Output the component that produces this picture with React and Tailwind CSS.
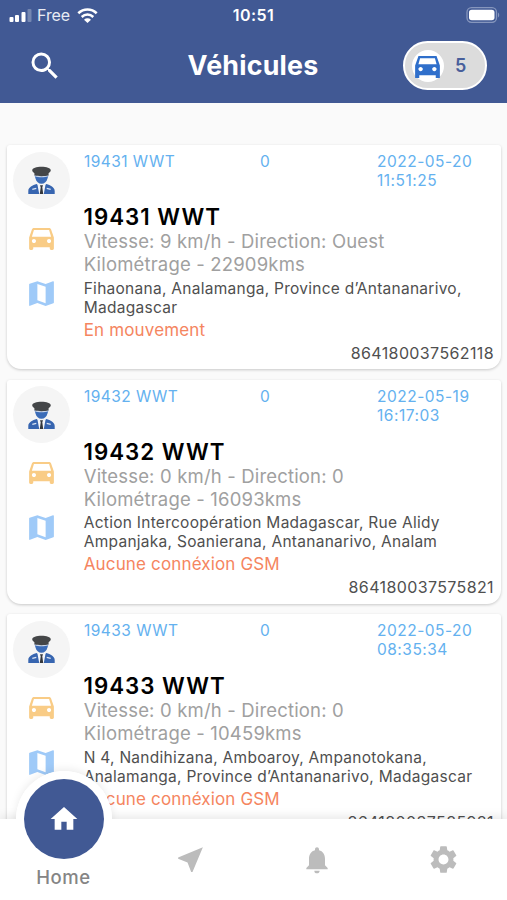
import { MdSearch, MdMap, MdHome, MdNearMe, MdNotifications, MdSettings } from 'react-icons/md';

const vehicles = [
  {
    name: '19431 WWT', date: '2022-05-20', time: '11:51:25', speed: '9', direction: 'Ouest', km: '22909',
    address: ['Fihaonana, Analamanga, Province d’Antananarivo,', 'Madagascar'],
    status: 'En mouvement', imei: '864180037562118',
  },
  {
    name: '19432 WWT', date: '2022-05-19', time: '16:17:03', speed: '0', direction: '0', km: '16093',
    address: ['Action Intercoopération Madagascar, Rue Alidy', 'Ampanjaka, Soanierana, Antananarivo, Analam'],
    status: 'Aucune connéxion GSM', imei: '864180037575821',
  },
  {
    name: '19433 WWT', date: '2022-05-20', time: '08:35:34', speed: '0', direction: '0', km: '10459',
    address: ['N 4, Nandihizana, Amboaroy, Ampanotokana,', 'Analamanga, Province d’Antananarivo, Madagascar'],
    status: 'Aucune connéxion GSM', imei: '864180037585981',
  },
];

function Driver() {
  return (
    <svg className="h-[28px] w-[27px]" viewBox="0 0 27 28">
      <path d="M6.500 9h14l-1 3.500c-.8 3.200-3 5.300-6 5.300s-5.200-2.100-6-5.300z" fill="#3b6cb8" />
      <path d="M6.600 9h13.800v1.300c-4 1.300-9.800 1.300-13.800 0z" fill="#c9d6ea" />
      <path d="M4.200 4.300C4.200 2 8.500.8 13.500.8s9.300 1.200 9.300 3.500c0 1.200-1.200 2.200-2.200 2.900v2.100c-4 1.200-10.200 1.200-14.200 0V7.200c-1-.7-2.200-1.700-2.200-2.900z" fill="#444648" />
      <path d="M.3 28v-3c0-4 4.500-5.600 8.200-7l5 2.500 5-2.500c3.700 1.400 8.200 3 8.200 7v3z" fill="#3765b0" />
      <path d="M9.300 17.800l4.200 1.600 4.200-1.600L15.800 28h-4.600z" fill="#f4f6fa" />
      <path d="M12 19.200h3l-.7 2 .9 6.800h-3.400l.9-6.800z" fill="#34373c" />
      <path d="M4.300 23.300l4-1M18.700 22.300l4 1" stroke="#dce6f5" strokeWidth="1.200" />
    </svg>
  );
}

function Car() {
  return (
    <svg className="mt-[12px] size-[33px] shrink-0 fill-[#f9cc86]" viewBox="0 0 24 24">
      <path fillRule="evenodd" d="M18.920 6.010C18.720 5.420 18.160 5 17.500 5h-11c-.66 0-1.210.42-1.420 1.010L3 12v8c0 .55.45 1 1 1h1c.55 0 1-.45 1-1v-1h12v1c0 .55.45 1 1 1h1c.55 0 1-.45 1-1v-8l-2.080-5.990zM6.500 16c-.83 0-1.500-.67-1.500-1.500S5.670 13 6.500 13s1.500.67 1.500 1.500S7.330 16 6.500 16zm11 0c-.83 0-1.500-.67-1.500-1.500s.67-1.500 1.500-1.500 1.500.67 1.500 1.500-.67 1.500-1.500 1.500zM5 11.500l1.500-5h11l1.500 5H5z" />
    </svg>
  );
}

function VehicleCard({ v }) {
  return (
    <article className="flex h-[224px] shrink-0 rounded-t-[3px] rounded-b-[14px] bg-white shadow-[0_1px_3px_rgba(0,0,0,0.2)]">
      <div className="flex w-[77px] shrink-0 flex-col items-center pr-[8px] pt-[6.500px]">
        <div className="flex size-[57px] items-center justify-center rounded-full bg-[#f5f5f5]">
          <Driver />
        </div>
        <Car />
        <MdMap className="mt-[23px] size-[33px] shrink-0 text-[#9fcaf8]" />
      </div>
      <div className="flex min-w-0 flex-1 flex-col pr-[7px] pt-[7px]">
        <div className="flex h-[51px] text-[15.500px] leading-[19px] tracking-[0.450px] text-[#64b1ef]">
          <span className="w-[176px]">{v.name}</span>
          <span className="w-[117px]">0</span>
          <span className="tracking-[0.500px]">{v.date}<br />{v.time}</span>
        </div>
        <h2 className="-ml-[0.500px] text-[22.300px] font-semibold leading-[27px] tracking-[1px] text-black">{v.name}</h2>
        <p className="-ml-[0.300px] whitespace-nowrap text-[18.500px] leading-[23px] tracking-[0.170px] text-[#a0a0a0]">
          Vitesse: {v.speed} km/h - Direction: {v.direction}<br />Kilométrage - {v.km}kms
        </p>
        <p className="-ml-[0.300px] mt-[2.500px] whitespace-nowrap text-[15.500px] leading-[19px] tracking-[0.270px] text-[#4f4f4f]">
          {v.address[0]}<br />{v.address[1]}
        </p>
        <p className="-ml-[0.300px] mt-[3px] text-[17px] leading-[20px] tracking-[0.150px] text-[#f58560]">{v.status}</p>
        <p className="mt-[3px] text-right text-[16px] leading-[20px] tracking-[0.380px] text-[#4f4f4f]">{v.imei}</p>
      </div>
    </article>
  );
}

function Header() {
  return (
    <header className="h-[102.500px] shrink-0 bg-[#415994] text-white">
      <div className="grid h-[30px] grid-cols-3 items-center pl-[9px] pr-[7px]">
        <div className="flex items-center">
          <svg className="h-[13px] w-[24px]" viewBox="0 0 24 13">
            <rect x="0.500" y="8" width="4" height="5" rx="1" fill="#fff" />
            <rect x="6" y="6" width="4" height="7" rx="1" fill="#fff" />
            <rect x="12.500" y="3" width="4" height="10" rx="1" fill="#fff" />
            <rect x="18.500" y="0" width="4" height="13" rx="1" fill="#7587b1" />
          </svg>
          <span className="ml-[4px] text-[16px] tracking-[-0.100px] text-[#e8ebf3]">Free</span>
          <svg className="ml-[7px] h-[15px] w-[21px]" viewBox="0 0 21 15">
            <path d="M1.300 5.300C6.600.2 14.400.2 19.700 5.300" fill="none" stroke="#fff" strokeWidth="2.600" />
            <path d="M4.700 9c3.400-3.200 8.200-3.200 11.600 0" fill="none" stroke="#fff" strokeWidth="2.500" />
            <path d="M10.500 15L7 11.700c2-1.800 5-1.800 7 0z" fill="#fff" />
          </svg>
        </div>
        <span className="-ml-[2px] text-center text-[16px] font-semibold tracking-[0.400px]">10:51</span>
        <svg className="h-[16px] w-[34px] justify-self-end" viewBox="0 0 34 16">
          <rect x="1" y="0.700" width="29.500" height="14.600" rx="4.500" fill="none" stroke="#8696bd" strokeWidth="1.300" />
          <rect x="3" y="2.700" width="25.500" height="10.600" rx="2.800" fill="#fff" />
          <path d="M32 5.500c1.600.8 1.600 4.200 0 5z" fill="#8696bd" />
        </svg>
      </div>
      <div className="flex h-[71px] items-center justify-between pl-[27px] pr-[20px]">
        <MdSearch className="size-[36px]" />
        <h1 className="ml-[40px] text-[26.800px] font-bold tracking-[0.200px]">Véhicules</h1>
        <div className="flex h-[49px] w-[84px] items-center rounded-full border-[2.500px] border-white bg-[#dcdcdc] pl-[7px]">
          <div className="flex size-[32px] items-center justify-center rounded-full bg-white">
            <svg className="size-[33px] shrink-0 fill-[#2f6fcb]" viewBox="0 0 24 24">
              <path fillRule="evenodd" d="M18.580 5H5.430L3 12v9h3v-2h12v2h3v-9L18.580 5zM6.600 6.800h10.800L18.600 11H5.400zM7 16.200c-.9 0-1.600-.7-1.600-1.600S6.100 13 7 13s1.600.7 1.600 1.600-.7 1.600-1.600 1.600zm10 0c-.9 0-1.600-.7-1.600-1.600S16.100 13 17 13s1.600.7 1.600 1.600-.7 1.600-1.600 1.600z" />
            </svg>
          </div>
          <span className="ml-[11px] text-[18px] font-semibold text-[#485f9b]">5</span>
        </div>
      </div>
    </header>
  );
}

function BottomNav() {
  return (
    <nav className="relative h-[81px] shrink-0 bg-white shadow-[0_-2px_10px_rgba(0,0,0,0.1)]">
      <div className="absolute left-[16px] top-[-48px] size-[96px] rounded-full bg-white shadow-[0_-2px_8px_rgba(0,0,0,0.08)]" />
      <div className="relative flex h-full bg-white text-[#bcbcbc]">
        <div className="relative w-[127px]">
          <div className="absolute left-[16px] top-[-48px] size-[96px] rounded-full bg-white" />
          <div className="absolute left-[24px] top-[-40px] flex size-[80px] items-center justify-center rounded-full bg-[#415994] text-white">
            <MdHome className="size-[32px]" />
          </div>
          <span className="absolute left-0 top-[46px] w-full text-center text-[18.500px] font-medium leading-[24px] tracking-[0.600px] text-[#858585]">Home</span>
        </div>
        <div className="flex flex-1 items-center justify-center"><MdNearMe className="size-[33px]" /></div>
        <div className="flex flex-1 items-center justify-center"><MdNotifications className="size-[32px]" /></div>
        <div className="flex flex-1 items-center justify-center"><MdSettings className="size-[33px]" /></div>
      </div>
    </nav>
  );
}

export default function App() {
  return (
    <div className="flex h-[900px] w-[507px] flex-col overflow-hidden bg-[#fafafa] font-['Inter','Liberation_Sans',sans-serif]">
      <Header />
      <main className="flex min-h-0 flex-1 flex-col gap-[10.600px] overflow-hidden pl-[7px] pr-[6px] pt-[42.500px]">
        {vehicles.map((v) => <VehicleCard key={v.name} v={v} />)}
      </main>
      <BottomNav />
    </div>
  );
}
